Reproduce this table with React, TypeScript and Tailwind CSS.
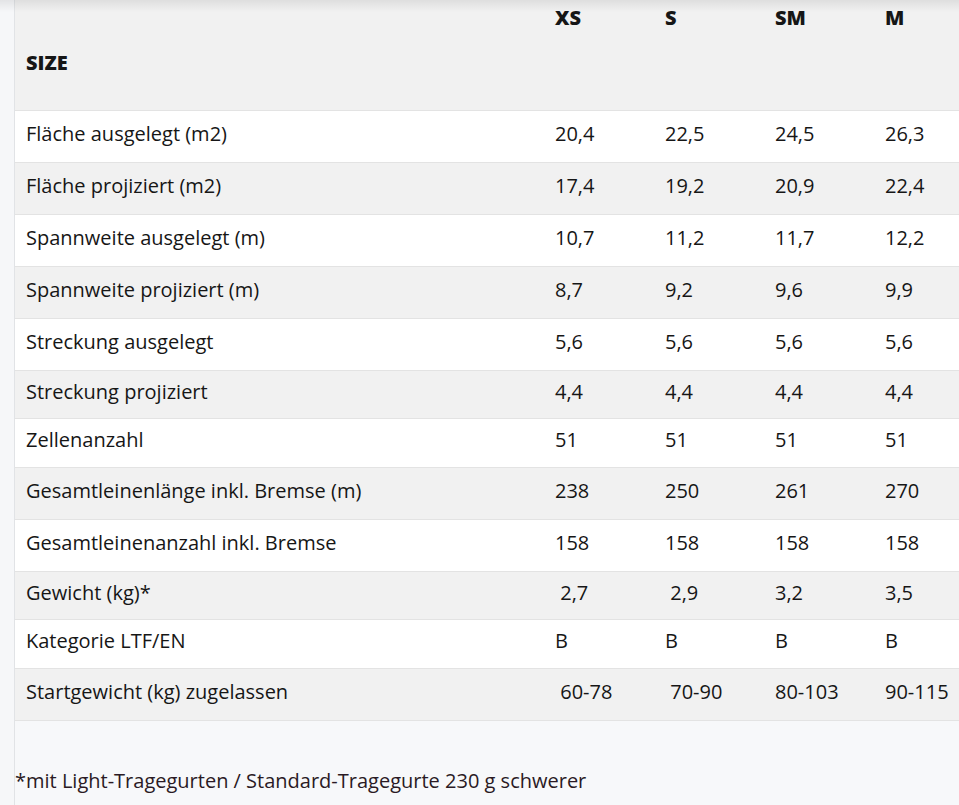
import React from "react";

const rows: { label: string; h: string; vals: string[] }[] = [
  { label: "Fläche ausgelegt (m2)", h: "h-[52px]", vals: ["20,4", "22,5", "24,5", "26,3"] },
  { label: "Fläche projiziert (m2)", h: "h-[52px]", vals: ["17,4", "19,2", "20,9", "22,4"] },
  { label: "Spannweite ausgelegt (m)", h: "h-[52px]", vals: ["10,7", "11,2", "11,7", "12,2"] },
  { label: "Spannweite projiziert (m)", h: "h-[52px]", vals: ["8,7", "9,2", "9,6", "9,9"] },
  { label: "Streckung ausgelegt", h: "h-[52px]", vals: ["5,6", "5,6", "5,6", "5,6"] },
  { label: "Streckung projiziert", h: "h-[48px]", vals: ["4,4", "4,4", "4,4", "4,4"] },
  { label: "Zellenanzahl", h: "h-[49px]", vals: ["51", "51", "51", "51"] },
  { label: "Gesamtleinenlänge inkl. Bremse (m)", h: "h-[52px]", vals: ["238", "250", "261", "270"] },
  { label: "Gesamtleinenanzahl inkl. Bremse", h: "h-[52px]", vals: ["158", "158", "158", "158"] },
  { label: "Gewicht (kg)*", h: "h-[48px]", vals: ["\u00a02,7", "\u00a02,9", "3,2", "3,5"] },
  { label: "Kategorie LTF/EN", h: "h-[49px]", vals: ["B", "B", "B", "B"] },
  { label: "Startgewicht (kg) zugelassen", h: "h-[52px]", vals: ["\u00a060-78", "\u00a070-90", "80-103", "90-115"] },
];

export default function App() {
  return (
    <div
      className="relative flex min-h-[805px] w-[959px] overflow-hidden bg-[#f7f8fa] text-[#161616]"
      style={{ fontFamily: "'Open Sans', 'Liberation Sans', sans-serif" }}
    >
      <div className="pointer-events-none absolute left-0 top-0 z-10 h-[12px] w-full bg-gradient-to-b from-[#00000014] to-transparent" />
      <div className="w-[14px] shrink-0 bg-[#f6f7f9]" />
      <div className="flex-1 border-l border-[#e1e3e6]">
        <table className="w-[1000px] table-fixed border-collapse text-[20px]">
          <colgroup>
            <col className="w-[529px]" />
            <col className="w-[110px]" />
            <col className="w-[110px]" />
            <col className="w-[110px]" />
            <col className="w-[141px]" />
          </colgroup>
          <thead>
            <tr className="h-[110px] border-b border-[#e3e3e3] bg-[#f1f1f1]">
              <th className="pl-[11px] pt-[16px] text-left align-middle font-extrabold">SIZE</th>
              {["XS", "S", "SM", "M"].map((s) => (
                <th key={s} className="pl-[11px] pt-[3px] text-left align-top font-extrabold">
                  {s}
                </th>
              ))}
            </tr>
          </thead>
          <tbody>
            {rows.map((r, i) => (
              <tr
                key={r.label}
                className={`${r.h} border-b border-[#e3e3e3] ${i % 2 === 0 ? "bg-white" : "bg-[#f1f1f1]"}`}
              >
                <td className="pb-[5px] pl-[11px] align-middle">{r.label}</td>
                {r.vals.map((v, j) => (
                  <td key={j} className="pb-[5px] pl-[11px] align-middle">
                    {v}
                  </td>
                ))}
              </tr>
            ))}
          </tbody>
        </table>
        <p className="mt-[45px] text-[20px] text-[#2a1a24]">
          *mit Light-Tragegurten / Standard-Tragegurte 230 g schwerer
        </p>
      </div>
    </div>
  );
}
